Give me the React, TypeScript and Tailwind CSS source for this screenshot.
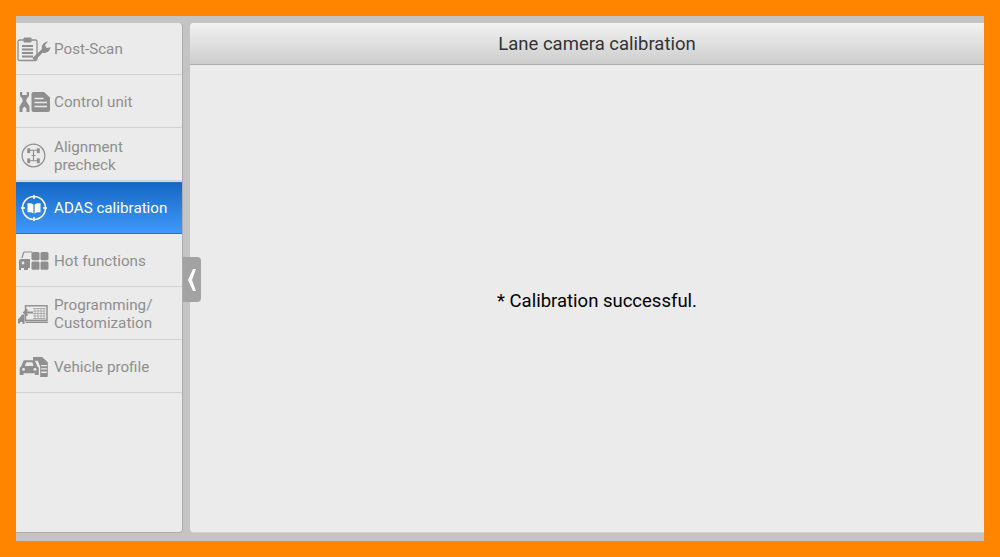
import { ReactNode } from 'react';

const PostScanIcon = () => (
  <svg width="36" height="25" viewBox="0 0 36 25" fill="none">
    <rect x="1" y="3" width="19" height="20.500" rx="1.500" stroke="currentColor" strokeWidth="1.300" />
    <rect x="6.500" y="0.500" width="8" height="5" rx="1" fill="currentColor" />
    <path d="M5 9h11M5 12.500h11M5 16h11M5 19.500h11" stroke="currentColor" strokeWidth="2" />
    <path
      d="M17.500 24l-2-3L25 12c-1-3.500 1.500-7 6-7.500l-3 3.500 1.500 3 4-.8c-.5 4-4 6.500-8 5.500z"
      fill="currentColor"
    />
  </svg>
);

const ControlUnitIcon = () => (
  <svg width="32" height="20" viewBox="0 0 32 20" fill="none">
    <path
      d="M1 0v4l2.200 2.500L3.800 9 .5 14.500V20h3v-3.500L5.500 14.500l2 2V20h3v-5.500L7.200 9l.6-2.500L10 4V0H7.800v3H3.200V0z"
      fill="currentColor"
    />
    <path d="M12.500 2a2 2 0 0 1 2-2h10.500l6 5.500V18a2 2 0 0 1-2 2H14.500a2 2 0 0 1-2-2z" fill="currentColor" />
    <path d="M15.500 6.500h9M15.500 10.500h12.500M15.500 14.500h12.500" stroke="#ebebeb" strokeWidth="1.600" />
  </svg>
);

const AlignmentIcon = () => (
  <svg width="25" height="25" viewBox="0 0 26 26" fill="none" stroke="currentColor">
    <circle cx="13" cy="13" r="11.800" strokeWidth="1.300" />
    <path d="M9 7.500h8M13 7.500v11M9 18.500h8M11 13h4" strokeWidth="1.200" />
    <rect x="6.500" y="5.500" width="3" height="5" fill="currentColor" stroke="none" />
    <rect x="16.500" y="5.500" width="3" height="5" fill="currentColor" stroke="none" />
    <rect x="6.500" y="16" width="3" height="5" fill="currentColor" stroke="none" />
    <rect x="16.500" y="16" width="3" height="5" fill="currentColor" stroke="none" />
  </svg>
);

const AdasIcon = () => (
  <svg width="26" height="26" viewBox="0 0 26 26" fill="none" stroke="currentColor">
    <circle cx="13" cy="13" r="11.500" strokeWidth="1.500" />
    <path d="M13 0v4M13 22v4M0 13h4M22 13h4" strokeWidth="1.500" />
    <path
      d="M12.400 9.500C11 8.300 8.800 8 6.500 8.300v9c2.300-.3 4.500 0 5.900 1.200zM13.600 9.500c1.400-1.200 3.600-1.500 5.900-1.200v9c-2.300-.3-4.500 0-5.900 1.200z"
      fill="currentColor"
      stroke="none"
    />
  </svg>
);

const HotFunctionsIcon = () => (
  <svg width="30" height="20" viewBox="0 0 30 20" fill="none">
    <path d="M3 7l1.500-5a1.500 1.500 0 0 1 1.400-1H13" stroke="currentColor" strokeWidth="1.200" />
    <path d="M0 10a2 2 0 0 1 2-2h9v9H9v2H5v-2H2v2H0z" fill="currentColor" />
    <circle cx="4" cy="12" r="1.400" fill="#ebebeb" />
    <rect x="12.500" y="1" width="8" height="8.300" rx="1.500" fill="currentColor" />
    <rect x="21.500" y="1" width="8" height="8.300" rx="1.500" fill="currentColor" />
    <rect x="12.500" y="10.500" width="8" height="8.300" rx="1.500" fill="currentColor" />
    <rect x="21.500" y="10.500" width="8" height="8.300" rx="1.500" fill="currentColor" />
  </svg>
);

const ProgrammingIcon = () => (
  <svg width="31" height="19" viewBox="0 0 31 19" fill="none">
    <rect x="7.500" y="0.800" width="21.500" height="14.500" stroke="currentColor" strokeWidth="1.400" />
    <path
      d="M15 3.500h12.500M15 6h12.500M15 8.500h12.500M15 11h12.500M15 13.500h12.500M17 3v11M20 3v11M23 3v11M26 3v11"
      stroke="currentColor"
      strokeWidth="1"
      opacity="0.6"
    />
    <path d="M7 16.500h23.500l-1 1.500H8z" fill="currentColor" />
    <path d="M15 7.500H7M9.500 4.500L6 7.500l3.500 3" stroke="currentColor" strokeWidth="1.800" />
    <path d="M0 18.500v-4.500l2-1.500 2-3h2.500v9.500H4.500v-2H2v1.500z" fill="currentColor" />
  </svg>
);

const VehicleProfileIcon = () => (
  <svg width="30" height="20" viewBox="0 0 30 21" fill="none">
    <path
      d="M0 12a2 2 0 0 1 1.500-2L3.500 5a2 2 0 0 1 2-1.500h9A2 2 0 0 1 16.500 5l2 5a2 2 0 0 1 1.500 2v7h-4v-2H4v2H0z"
      fill="currentColor"
    />
    <path d="M5.500 9.500l1.200-4h6.600l1.200 4z" fill="#ebebeb" />
    <circle cx="4" cy="13" r="1.500" fill="#ebebeb" />
    <circle cx="16" cy="13" r="1.500" fill="#ebebeb" />
    <path d="M14 0h9.500L29.500 5.500V20a1 1 0 0 1-1 1H21.500V10L19 4h-5z" fill="currentColor" />
    <path d="M22.500 9h6M22.500 12.500h6M22.500 16h6" stroke="#ebebeb" strokeWidth="1.400" />
  </svg>
);

interface NavRowProps {
  icon: ReactNode;
  label: ReactNode;
  active?: boolean;
  iconClass?: string;
  rowClass?: string;
}

const NavRow = ({ icon, label, active, iconClass = 'pl-[3px]', rowClass = 'h-[53px] pt-[2px]' }: NavRowProps) => (
  <div
    className={
      active
        ? `flex items-center border-y border-[#2a6fbe] bg-gradient-to-b from-[#1468c4] to-[#3f99fb] text-white ${rowClass}`
        : `flex items-center border-b border-[#d2d2d2] text-[#8f8f8f] ${rowClass}`
    }
  >
    <div className={`flex w-[38px] shrink-0 items-center ${iconClass}`}>{icon}</div>
    <div className="text-[15.2px] leading-[18px]">{label}</div>
  </div>
);

export default function App() {
  return (
    <div className="h-[557px] w-[1000px] overflow-hidden bg-[#ff8500] p-4 font-['Roboto',sans-serif]">
      <div className="flex h-[525px] gap-[7px] bg-[#c4c4c4] pt-[7px] pb-2">
        <aside className="relative w-[167px] shrink-0 rounded-tr-[4px] rounded-br-[4px] border-r border-b border-[#adadad] bg-[#ebebeb]">
          <nav>
            <NavRow icon={<PostScanIcon />} iconClass="pl-px" rowClass="h-[52px] pt-px" label="Post-Scan" />
            <NavRow icon={<ControlUnitIcon />} label="Control unit" />
            <NavRow
              icon={<AlignmentIcon />}
              iconClass="pl-[5px]"
              rowClass="h-[53px] pt-[3px]"
              label={<>Alignment<br />precheck</>}
            />
            <div className="h-px bg-[#d8d8d8]" />
            <NavRow active icon={<AdasIcon />} iconClass="pl-[5px]" rowClass="h-[52px]" label="ADAS calibration" />
            <NavRow icon={<HotFunctionsIcon />} label="Hot functions" />
            <NavRow icon={<ProgrammingIcon />} iconClass="pl-[2px]" label={<>Programming/<br />Customization</>} />
            <NavRow icon={<VehicleProfileIcon />} label="Vehicle profile" />
          </nav>
          <button className="absolute top-[234px] left-[167px] flex h-[45px] w-[18px] items-center justify-center rounded-r-[4px] bg-[#a3a3a3] text-white">
            <svg width="8" height="22" viewBox="0 0 8 22" fill="currentColor">
              <path d="M5 0h3L4 11l4 11H5L0 11z" />
            </svg>
          </button>
        </aside>

        <main className="flex min-w-0 flex-1 flex-col rounded-tl-[4px] rounded-bl-[4px] border-b border-[#d0d0d0] bg-[#ebebeb]">
          <header className="flex h-[42px] shrink-0 items-center justify-center rounded-tl-[4px] border-b border-[#adadad] bg-gradient-to-b from-[#f2f2f2] to-[#cdcdcd] pt-[3px] pl-5 text-[18.5px] text-[#333333]">
            Lane camera calibration
          </header>
          <div className="flex flex-1 items-center justify-center pt-[6px] pl-5 text-[18.5px] text-black">
            * Calibration successful.
          </div>
        </main>
      </div>
    </div>
  );
}
